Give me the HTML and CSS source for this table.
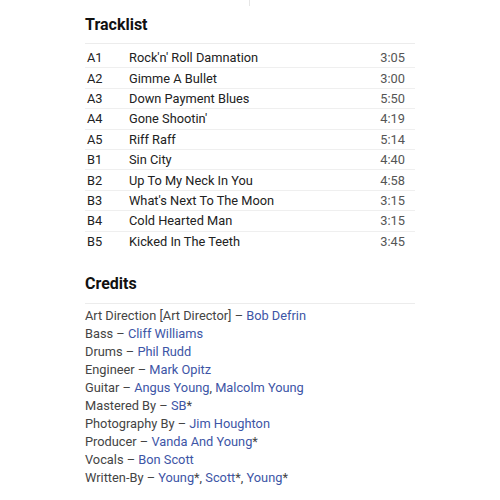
FILE: index.html
```html
<!DOCTYPE html>
<html>
<head>
<meta charset="utf-8">
<link rel="stylesheet" href="styles.css">
</head>
<body>
<div class="page">
  <div class="topline"></div>
  <section class="section">
    <h2 class="heading">Tracklist</h2>
    <table class="tracks">
      <tr><td class="pos">A1</td><td class="title">Rock'n' Roll Damnation</td><td class="dur">3:05</td></tr>
      <tr><td class="pos">A2</td><td class="title">Gimme A Bullet</td><td class="dur">3:00</td></tr>
      <tr><td class="pos">A3</td><td class="title">Down Payment Blues</td><td class="dur">5:50</td></tr>
      <tr><td class="pos">A4</td><td class="title">Gone Shootin'</td><td class="dur">4:19</td></tr>
      <tr><td class="pos">A5</td><td class="title">Riff Raff</td><td class="dur">5:14</td></tr>
      <tr><td class="pos">B1</td><td class="title">Sin City</td><td class="dur">4:40</td></tr>
      <tr><td class="pos">B2</td><td class="title">Up To My Neck In You</td><td class="dur">4:58</td></tr>
      <tr><td class="pos">B3</td><td class="title">What's Next To The Moon</td><td class="dur">3:15</td></tr>
      <tr><td class="pos">B4</td><td class="title">Cold Hearted Man</td><td class="dur">3:15</td></tr>
      <tr class="last"><td class="pos">B5</td><td class="title">Kicked In The Teeth</td><td class="dur">3:45</td></tr>
    </table>
  </section>
  <section class="section credits-section">
    <h2 class="heading">Credits</h2>
    <ul class="credits">
      <li>Art Direction [Art Director] – <a>Bob Defrin</a></li>
      <li>Bass – <a>Cliff Williams</a></li>
      <li>Drums – <a>Phil Rudd</a></li>
      <li>Engineer – <a>Mark Opitz</a></li>
      <li>Guitar – <a>Angus Young</a>, <a>Malcolm Young</a></li>
      <li>Mastered By – <a>SB</a>*</li>
      <li>Photography By – <a>Jim Houghton</a></li>
      <li>Producer – <a>Vanda And Young</a>*</li>
      <li>Vocals – <a>Bon Scott</a></li>
      <li>Written-By – <a>Young</a>*, <a>Scott</a>*, <a>Young</a>*</li>
    </ul>
  </section>
</div>
</body>
</html>
```
FILE: styles.css
```css
html, body {
  margin: 0;
  padding: 0;
  background: #fff;
}
body {
  font-family: Roboto, "Liberation Sans", sans-serif;
  color: #222;
}
.page {
  padding-left: 85px;
  width: 330px;
}
.topline {
  width: 1px;
  height: 6px;
  margin-left: 164px;
  background: #e6e6e6;
}
.heading {
  margin: 0;
  font-size: 16px;
  font-weight: 700;
  line-height: 20px;
  padding: 9px 0 8px;
  border-bottom: 1px solid #ececec;
  color: #111;
}
.tracks {
  width: 100%;
  border-collapse: collapse;
  font-size: 12.8px;
  margin-top: 4px;
}
.tracks td {
  height: 19.4px;
  line-height: 15px;
  padding: 0;
  border-bottom: 1px solid #efefef;
  vertical-align: middle;
  color: #222;
}
.tracks tr.last td {
  border-bottom: none;
}
.tracks .pos {
  width: 42px;
  padding-left: 2px;
}
.tracks .dur {
  text-align: right;
  padding-right: 10px;
  color: #555;
}
.credits-section {
  margin-top: 14px;
}
.credits-section .heading {
  padding-bottom: 9px;
}
.credits {
  list-style: none;
  margin: 0;
  padding: 3px 0 0;
  font-size: 12.8px;
  line-height: 18px;
  color: #444;
}
.credits a {
  color: #3d55a6;
}
```
